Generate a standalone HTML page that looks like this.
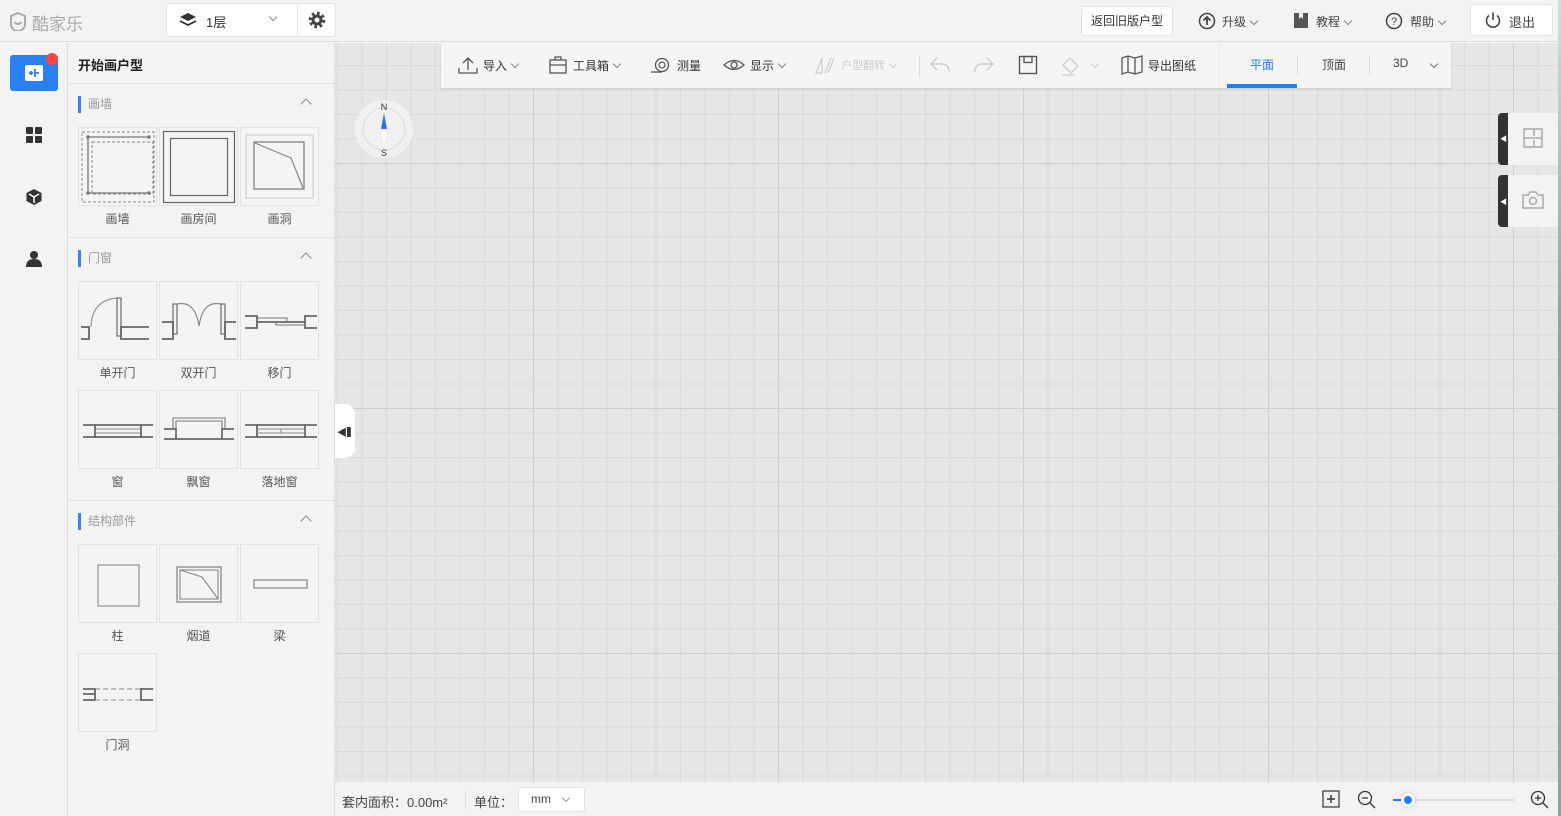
<!DOCTYPE html>
<html><head><meta charset="utf-8">
<style>
*{box-sizing:border-box;margin:0;padding:0}
body{width:1561px;height:816px;overflow:hidden;position:relative;background:#f3f3f3;font-family:"Liberation Sans","Noto Sans CJK SC",sans-serif;color:#333;font-size:12px}
.a{position:absolute}
.hdr{left:0;top:0;width:1561px;height:42px;background:#f3f3f3;border-bottom:1px solid #ddd}
.btn{background:#fff;border:1px solid #e3e3e3;border-radius:3px}
.canvas{left:335px;top:43px;width:1223px;height:739px;background-color:#e6e6e6;
background-image:
linear-gradient(to right,#cfcfcf 1px,transparent 1px),
linear-gradient(to bottom,#cfcfcf 1px,transparent 1px),
linear-gradient(to right,#dadada 1px,transparent 1px),
linear-gradient(to bottom,#dadada 1px,transparent 1px);
background-size:245px 245px,245px 245px,24.5px 24.5px,24.5px 24.5px;
background-position:198px 120px,198px 120px,198px 120px,198px 120px}
.side{left:0;top:43px;width:68px;height:773px;background:#f3f3f3;border-right:1px solid #ddd}
.panel{left:68px;top:43px;width:267px;height:773px;background:#f3f3f3;border-right:1px solid #ddd}
.sec{position:absolute;left:10px;font-size:12px;color:#999;padding-left:7px;border-left:3px solid #3d7ff4;line-height:17px}
.car{position:absolute;left:234px;width:8px;height:8px;border-left:1.5px solid #888;border-top:1.5px solid #888;transform:rotate(45deg)}
.tile{position:absolute;width:79px;height:79px;border:1px solid #e2e2e2;background:#f4f4f4}
.lbl{position:absolute;width:79px;text-align:center;font-size:12px;color:#555}
.tb{left:441px;top:43px;width:779px;height:45px;background:#f5f5f5;box-shadow:0 1px 2px rgba(0,0,0,.12)}
.tb2{left:1220px;top:43px;width:231px;height:45px;background:#f5f5f5;box-shadow:0 1px 2px rgba(0,0,0,.12)}
.ti{position:absolute;font-size:12px;color:#333;display:flex;align-items:center;gap:5px}
.ch{display:inline-block;width:6px;height:6px;border-right:1.3px solid #888;border-bottom:1.3px solid #888;transform:rotate(45deg);margin:0 0 3px 5px;vertical-align:middle}
.bot{left:335px;top:782px;width:1223px;height:34px;background:#f3f3f3}
</style></head><body>
<div class="a hdr"></div>
<svg class="a" style="left:8px;top:11px" width="20" height="20" viewBox="0 0 20 20"><path d="M10 2 L17 5 V13 A7 7 0 0 1 3 13 V5 Z" fill="none" stroke="#aaa" stroke-width="2"/><path d="M6.5 11 Q10 15 13.5 11" fill="none" stroke="#aaa" stroke-width="2"/></svg>
<div class="a" style="left:32px;top:10px;font-size:17px;color:#aaa">酷家乐</div>
<div class="a btn" style="left:166px;top:3px;width:170px;height:34px"></div>
<div class="a" style="left:297px;top:4px;width:1px;height:32px;background:#e3e3e3"></div>
<svg class="a" style="left:179px;top:12px" width="18" height="16" viewBox="0 0 18 16"><path d="M9 1 L17 5 L9 9 L1 5Z" fill="#333"/><path d="M1 9 L9 13 L17 9" fill="none" stroke="#333" stroke-width="1.8"/></svg>
<div class="a" style="left:206px;top:12px;font-size:13px">1层</div>
<span class="a ch" style="left:265px;top:14px"></span>
<svg class="a" style="left:308px;top:11px" width="18" height="18" viewBox="0 0 18 18"><circle cx="9" cy="9" r="6.8" fill="none" stroke="#444" stroke-width="3" stroke-dasharray="2.7 2.6"/><circle cx="9" cy="9" r="4" fill="none" stroke="#444" stroke-width="3"/></svg>
<div class="a btn" style="left:1081px;top:6px;width:92px;height:30px;font-size:12px;text-align:center;line-height:28px">返回旧版户型</div>
<svg class="a" style="left:1198px;top:12px" width="18" height="18" viewBox="0 0 18 18"><circle cx="9" cy="9" r="7.5" fill="none" stroke="#444" stroke-width="1.5"/><path d="M9 13 V5 M5.5 8.5 L9 5 L12.5 8.5" fill="none" stroke="#444" stroke-width="1.8"/></svg>
<div class="a" style="left:1222px;top:13px;color:#444">升级<span class="ch"></span></div>
<svg class="a" style="left:1293px;top:12px" width="16" height="17" viewBox="0 0 16 17"><path d="M1 1 H6 V7 L8 5 L10 7 V1 H15 V16 H1Z" fill="#555"/></svg>
<div class="a" style="left:1316px;top:13px;color:#444">教程<span class="ch"></span></div>
<svg class="a" style="left:1385px;top:12px" width="18" height="18" viewBox="0 0 18 18"><circle cx="9" cy="9" r="7.5" fill="none" stroke="#444" stroke-width="1.5"/><text x="9" y="13" text-anchor="middle" font-size="11" fill="#444" font-family="Liberation Sans">?</text></svg>
<div class="a" style="left:1410px;top:13px;color:#444">帮助<span class="ch"></span></div>
<div class="a btn" style="left:1470px;top:4px;width:83px;height:32px"></div>
<svg class="a" style="left:1484px;top:11px" width="18" height="18" viewBox="0 0 18 18"><path d="M5 4.5 A6.5 6.5 0 1 0 13 4.5" fill="none" stroke="#444" stroke-width="1.6"/><path d="M9 1.5 V9" stroke="#444" stroke-width="1.6"/></svg>
<div class="a" style="left:1509px;top:12px;font-size:13px;color:#444">退出</div>

<div class="a canvas"></div>
<div class="a" style="left:1558px;top:0;width:3px;height:816px;background:linear-gradient(#d8dcd9,#8fa39b 40%,#8fa39b)"></div>
<svg class="a" style="left:354px;top:99px" width="60" height="60" viewBox="0 0 60 60"><circle cx="30" cy="30" r="29" fill="#f0f0f0"/><circle cx="30" cy="30" r="21" fill="none" stroke="#ddd" stroke-width="1.2"/><text x="30" y="11" text-anchor="middle" font-size="9" fill="#333" font-family="Liberation Sans">N</text><text x="30" y="57" text-anchor="middle" font-size="9" fill="#333" font-family="Liberation Sans">S</text><path d="M30 14 L33 30 H27Z" fill="#2a6fe8"/><path d="M30 46 L33 30 H27Z" fill="#fff"/></svg>
<div class="a" style="left:335px;top:404px;width:20px;height:54px;background:#fff;border-radius:0 10px 10px 0"></div>
<div class="a" style="left:337px;top:424px;font-size:10px;color:#333">◀▍</div>
<div class="a" style="left:1498px;top:113px;width:60px;height:52px;background:#f3f3f3;border-radius:4px 0 0 4px;border-left:10px solid #333"></div>
<div class="a" style="left:1498px;top:175px;width:60px;height:52px;background:#f3f3f3;border-radius:4px 0 0 4px;border-left:10px solid #333"></div>
<div class="a" style="left:1500px;top:134px;color:#fff;font-size:7px">◀</div>
<div class="a" style="left:1500px;top:197px;color:#fff;font-size:7px">◀</div>
<svg class="a" style="left:1523px;top:128px" width="20" height="20" viewBox="0 0 20 20"><rect x="1" y="1" width="18" height="18" fill="none" stroke="#aaa" stroke-width="1.5"/><path d="M1 10 H19 M11 1 V8 M11 12 V19" stroke="#aaa" stroke-width="1.5"/></svg>
<svg class="a" style="left:1522px;top:191px" width="22" height="18" viewBox="0 0 22 18"><path d="M1 4 H6 L8 1 H14 L16 4 H21 V17 H1Z" fill="none" stroke="#aaa" stroke-width="1.5"/><circle cx="11" cy="10" r="3.5" fill="none" stroke="#aaa" stroke-width="1.5"/></svg>

<div class="a tb"></div>
<div class="a tb2"></div>
<div class="ti" style="left:458px;top:56px"><svg width="20" height="18" viewBox="0 0 20 18"><path d="M10 14 V2 M5 7 L10 2 L15 7 M1 12 V17 H19 V12" fill="none" stroke="#555" stroke-width="1.3"/></svg><span>导入</span><span class="ch" style="margin-left:0"></span></div>
<div class="ti" style="left:548px;top:56px"><svg width="20" height="18" viewBox="0 0 20 18"><rect x="2" y="4" width="16" height="13" fill="none" stroke="#555" stroke-width="1.3"/><path d="M7 4 V1 H13 V4 M2 9 H18" fill="none" stroke="#555" stroke-width="1.3"/></svg><span>工具箱</span><span class="ch" style="margin-left:0"></span></div>
<div class="ti" style="left:650px;top:56px"><svg width="22" height="18" viewBox="0 0 22 18"><circle cx="12" cy="9" r="6.5" fill="none" stroke="#555" stroke-width="1.3"/><circle cx="12" cy="9" r="3" fill="none" stroke="#555" stroke-width="1.2"/><path d="M1 16 H12" stroke="#555" stroke-width="1.3"/></svg><span>测量</span></div>
<div class="ti" style="left:723px;top:56px"><svg width="22" height="18" viewBox="0 0 22 18"><path d="M1 9 Q11 0 21 9 Q11 18 1 9Z" fill="none" stroke="#555" stroke-width="1.3"/><circle cx="11" cy="9" r="3" fill="none" stroke="#555" stroke-width="1.3"/></svg><span>显示</span><span class="ch" style="margin-left:0"></span></div>
<div class="ti" style="left:814px;top:56px;color:#ccc"><svg width="22" height="18" viewBox="0 0 22 18"><path d="M2 17 L8 2 V17Z M11 17 L17 2 M14 17 L20 2" fill="none" stroke="#ccc" stroke-width="1.2"/></svg><span style="font-size:11px">户型翻转</span><span class="ch" style="margin-left:0;border-color:#ccc"></span></div>
<div class="a" style="left:919px;top:55px;width:1px;height:22px;background:#ddd"></div>
<svg class="a" style="left:929px;top:56px" width="22" height="18" viewBox="0 0 22 18"><path d="M8 2 L2 8 L8 14 M2 8 H13 Q20 8 20 16" fill="none" stroke="#ccc" stroke-width="1.4"/></svg>
<svg class="a" style="left:973px;top:56px" width="22" height="18" viewBox="0 0 22 18"><path d="M14 2 L20 8 L14 14 M20 8 H9 Q2 8 2 16" fill="none" stroke="#ccc" stroke-width="1.4"/></svg>
<svg class="a" style="left:1018px;top:55px" width="20" height="20" viewBox="0 0 20 20"><rect x="1.5" y="1.5" width="17" height="17" fill="none" stroke="#555" stroke-width="1.4"/><rect x="6" y="1.5" width="8" height="6" fill="none" stroke="#555" stroke-width="1.3"/></svg>
<svg class="a" style="left:1060px;top:56px" width="24" height="20" viewBox="0 0 24 20"><path d="M10 2 L18 10 L11 17 L3 9Z M2 19 H14" fill="none" stroke="#ccc" stroke-width="1.3"/></svg>
<span class="a ch" style="left:1087px;top:61px;border-color:#ccc"></span>
<div class="ti" style="left:1121px;top:55px"><svg width="22" height="20" viewBox="0 0 22 20"><path d="M1 3 L7 1 L14 3 L21 1 V17 L14 19 L7 17 L1 19Z M7 1 V17 M14 3 V19" fill="none" stroke="#555" stroke-width="1.3"/></svg><span>导出图纸</span></div>
<div class="a" style="left:1250px;top:56px;color:#1f7ef0;font-size:12px">平面</div>
<div class="a" style="left:1227px;top:84px;width:70px;height:4px;background:#1f7ef0"></div>
<div class="a" style="left:1297px;top:55px;width:1px;height:20px;background:#ddd"></div>
<div class="a" style="left:1322px;top:56px;color:#444">顶面</div>
<div class="a" style="left:1369px;top:55px;width:1px;height:20px;background:#ddd"></div>
<div class="a" style="left:1393px;top:56px;color:#444">3D</div>
<span class="a ch" style="left:1426px;top:61px;border-color:#777"></span>

<div class="a bot"></div>
<div class="a" style="left:342px;top:792px;font-size:13px;color:#444">套内面积：0.00m²</div>
<div class="a" style="left:465px;top:791px;width:1px;height:18px;background:#ddd"></div>
<div class="a" style="left:474px;top:792px;font-size:13px;color:#444">单位：</div>
<div class="a btn" style="left:518px;top:787px;width:67px;height:25px;font-size:12px;line-height:23px;padding-left:12px;color:#444">mm<span class="ch" style="margin-left:12px;border-color:#999"></span></div>
<svg class="a" style="left:1322px;top:790px" width="18" height="18" viewBox="0 0 18 18"><rect x="1" y="1" width="16" height="16" fill="none" stroke="#333" stroke-width="1.2"/><path d="M9 5 V13 M5 9 H13" stroke="#333" stroke-width="1.4"/></svg>
<svg class="a" style="left:1357px;top:790px" width="20" height="20" viewBox="0 0 20 20"><circle cx="8" cy="8" r="6.5" fill="none" stroke="#333" stroke-width="1.3"/><path d="M5 8 H11 M13 13 L18 18" stroke="#333" stroke-width="1.3"/></svg>
<div class="a" style="left:1393px;top:799px;width:121px;height:2px;background:#ddd"></div>
<div class="a" style="left:1393px;top:799px;width:12px;height:2px;background:#1f7ef0"></div>
<div class="a" style="left:1401px;top:793px;width:14px;height:14px;border-radius:50%;background:#1f7ef0;border:3px solid #fff;box-shadow:0 0 3px rgba(0,0,0,.25)"></div>
<svg class="a" style="left:1530px;top:790px" width="20" height="20" viewBox="0 0 20 20"><circle cx="8" cy="8" r="6.5" fill="none" stroke="#333" stroke-width="1.3"/><path d="M5 8 H11 M8 5 V11 M13 13 L18 18" stroke="#333" stroke-width="1.3"/></svg>

<div class="a side"></div>
<div class="a" style="left:10px;top:55px;width:48px;height:36px;background:#2a7ff3;border-radius:3px"></div>
<div class="a" style="left:46px;top:53px;width:12px;height:12px;border-radius:50%;background:#f44"></div>
<svg class="a" style="left:25px;top:65px" width="18" height="16" viewBox="0 0 18 16"><rect x="0" y="0" width="18" height="16" rx="2" fill="#fff"/><path d="M4 8 H8 M6 6 V10 M10 4 V12 M10 8 H14" stroke="#2a7ff3" stroke-width="1.8"/></svg>
<svg class="a" style="left:26px;top:127px" width="16" height="16" viewBox="0 0 16 16"><rect x="0" y="0" width="7" height="7" rx="1" fill="#333"/><rect x="9" y="0" width="7" height="7" rx="1" fill="#333"/><rect x="0" y="9" width="7" height="7" rx="1" fill="#333"/><rect x="9" y="9" width="7" height="7" rx="1" fill="#333"/></svg>
<svg class="a" style="left:25px;top:188px" width="18" height="18" viewBox="0 0 18 18"><path d="M9 1 L16.5 5 V13 L9 17 L1.5 13 V5Z" fill="#333"/><path d="M4 6 L9 9 L14 6 M9 9 V15" fill="none" stroke="#fff" stroke-width="1.5"/></svg>
<svg class="a" style="left:26px;top:250px" width="16" height="17" viewBox="0 0 16 17"><circle cx="8" cy="5" r="4" fill="#333"/><path d="M0 17 Q0 9 8 9 Q16 9 16 17Z" fill="#333"/></svg>

<div class="a panel">
<div style="position:absolute;left:10px;top:12px;font-size:13px;font-weight:bold;color:#222">开始画户型</div>
<div style="position:absolute;left:0;top:40px;width:266px;height:1px;background:#e2e2e2"></div>
<div class="sec" style="top:53px">画墙</div><div class="car" style="top:57px"></div>
<div class="sec" style="top:207px">门窗</div><div class="car" style="top:211px"></div>
<div class="sec" style="top:470px">结构部件</div><div class="car" style="top:474px"></div>
<div style="position:absolute;left:0;top:194px;width:266px;height:1px;background:#e2e2e2"></div>
<div style="position:absolute;left:0;top:457px;width:266px;height:1px;background:#e2e2e2"></div>
</div>
<div class="tile" style="left:78px;top:127px"><svg width="77" height="77"><rect x="3" y="4" width="72" height="70" fill="none" stroke="#888" stroke-dasharray="3 2"/><rect x="13" y="14" width="61" height="52" fill="none" stroke="#888" stroke-dasharray="3 2"/><path d="M9 9 H70 M9 9 V65 H70" fill="none" stroke="#777" stroke-width="1.3"/><circle cx="9" cy="9" r="1.8" fill="#777"/><circle cx="70" cy="9" r="1.8" fill="#777"/><circle cx="9" cy="65" r="1.8" fill="#777"/><circle cx="70" cy="65" r="1.8" fill="#777"/></svg></div>
<div class="tile" style="left:159px;top:127px"><svg width="77" height="77"><rect x="3.5" y="3.5" width="71" height="71" fill="none" stroke="#666" stroke-width="1.2"/><rect x="10.5" y="10.5" width="57" height="57" fill="none" stroke="#666" stroke-width="1.2"/></svg></div>
<div class="tile" style="left:240px;top:127px"><svg width="79" height="77"><rect x="5" y="7" width="67" height="63" fill="none" stroke="#ddd" stroke-width="2"/><rect x="13" y="14" width="50" height="47" fill="none" stroke="#777" stroke-width="1.2"/><path d="M14 15 L50 30 L62 60" fill="none" stroke="#888" stroke-width="1.2"/></svg></div>
<div class="lbl" style="left:78px;top:210px">画墙</div>
<div class="lbl" style="left:159px;top:210px">画房间</div>
<div class="lbl" style="left:240px;top:210px">画洞</div>
<div class="tile" style="left:78px;top:281px"><svg width="77" height="77"><path d="M12 45 Q13 18 38 16" fill="none" stroke="#999" stroke-width="1.2"/><path d="M38 16 H42 V54 H38Z" fill="none" stroke="#777" stroke-width="1.3"/><path d="M2 45 H10 V57 H2 M70 45 H42 V57 H70" fill="none" stroke="#666" stroke-width="1.8"/></svg></div>
<div class="tile" style="left:159px;top:281px"><svg width="77" height="77"><path d="M13 22 H17 V52 H13Z M61 22 H65 V52 H61Z" fill="none" stroke="#777" stroke-width="1.3"/><path d="M17 22 Q35 18 39 44 Q43 18 61 22" fill="none" stroke="#888" stroke-width="1.2"/><path d="M2 40 H13 V57 H2 M76 40 H65 V57 H76" fill="none" stroke="#666" stroke-width="1.8"/></svg></div>
<div class="tile" style="left:240px;top:281px"><svg width="79" height="77"><path d="M4 34 H16 V46 H4 M76 34 H64 V46 H76 M16 40 H64" fill="none" stroke="#666" stroke-width="1.8"/><path d="M16 36 H46 V40 M35 40 V43 H64" fill="none" stroke="#777" stroke-width="1.1"/></svg></div>
<div class="lbl" style="left:78px;top:364px">单开门</div>
<div class="lbl" style="left:159px;top:364px">双开门</div>
<div class="lbl" style="left:240px;top:364px">移门</div>
<div class="tile" style="left:78px;top:390px"><svg width="77" height="77"><path d="M4 34 H16 V46 H4 M74 34 H62 V46 H74" fill="none" stroke="#666" stroke-width="1.8"/><path d="M16 34 H62 M16 46 H62" stroke="#666" stroke-width="1.8"/><path d="M16 38 H62 M16 42 H62" stroke="#888" stroke-width="1"/></svg></div>
<div class="tile" style="left:159px;top:390px"><svg width="77" height="77"><path d="M4 38 H16 V48 H4 M74 38 H62 V48 H74 M16 48 H62" fill="none" stroke="#666" stroke-width="1.8"/><path d="M13 38 V27 H65 V38 M16 46 V30 H62 V46" fill="none" stroke="#777" stroke-width="1.1"/></svg></div>
<div class="tile" style="left:240px;top:390px"><svg width="79" height="77"><path d="M4 34 H16 V46 H4 M76 34 H64 V46 H76" fill="none" stroke="#666" stroke-width="1.8"/><path d="M16 34 H64 M16 46 H64" stroke="#666" stroke-width="1.8"/><path d="M16 38 H64 M16 42 H64 M40 38 V42" stroke="#888" stroke-width="1"/></svg></div>
<div class="lbl" style="left:78px;top:473px">窗</div>
<div class="lbl" style="left:159px;top:473px">飘窗</div>
<div class="lbl" style="left:240px;top:473px">落地窗</div>
<div class="tile" style="left:78px;top:544px"><svg width="77" height="77"><rect x="19" y="20" width="41" height="41" fill="none" stroke="#999" stroke-width="1.3"/></svg></div>
<div class="tile" style="left:159px;top:544px"><svg width="77" height="77"><rect x="17" y="22" width="44" height="35" fill="none" stroke="#888" stroke-width="1.3"/><rect x="20" y="25" width="38" height="29" fill="none" stroke="#888" stroke-width="1.1"/><path d="M20 25 L42 32 L58 54" fill="none" stroke="#888" stroke-width="1.1"/></svg></div>
<div class="tile" style="left:240px;top:544px"><svg width="79" height="77"><rect x="13" y="35" width="53" height="8" fill="none" stroke="#777" stroke-width="1.1"/></svg></div>
<div class="lbl" style="left:78px;top:627px">柱</div>
<div class="lbl" style="left:159px;top:627px">烟道</div>
<div class="lbl" style="left:240px;top:627px">梁</div>
<div class="tile" style="left:78px;top:653px"><svg width="77" height="77"><path d="M4 35 H16 V46 H4 M74 35 H62 V46 H74 M16 40 H4" fill="none" stroke="#666" stroke-width="1.8"/><path d="M16 35 H62 M16 46 H62" stroke="#888" stroke-width="1" stroke-dasharray="5 3"/></svg></div>
<div class="lbl" style="left:78px;top:736px">门洞</div>
</body></html>
